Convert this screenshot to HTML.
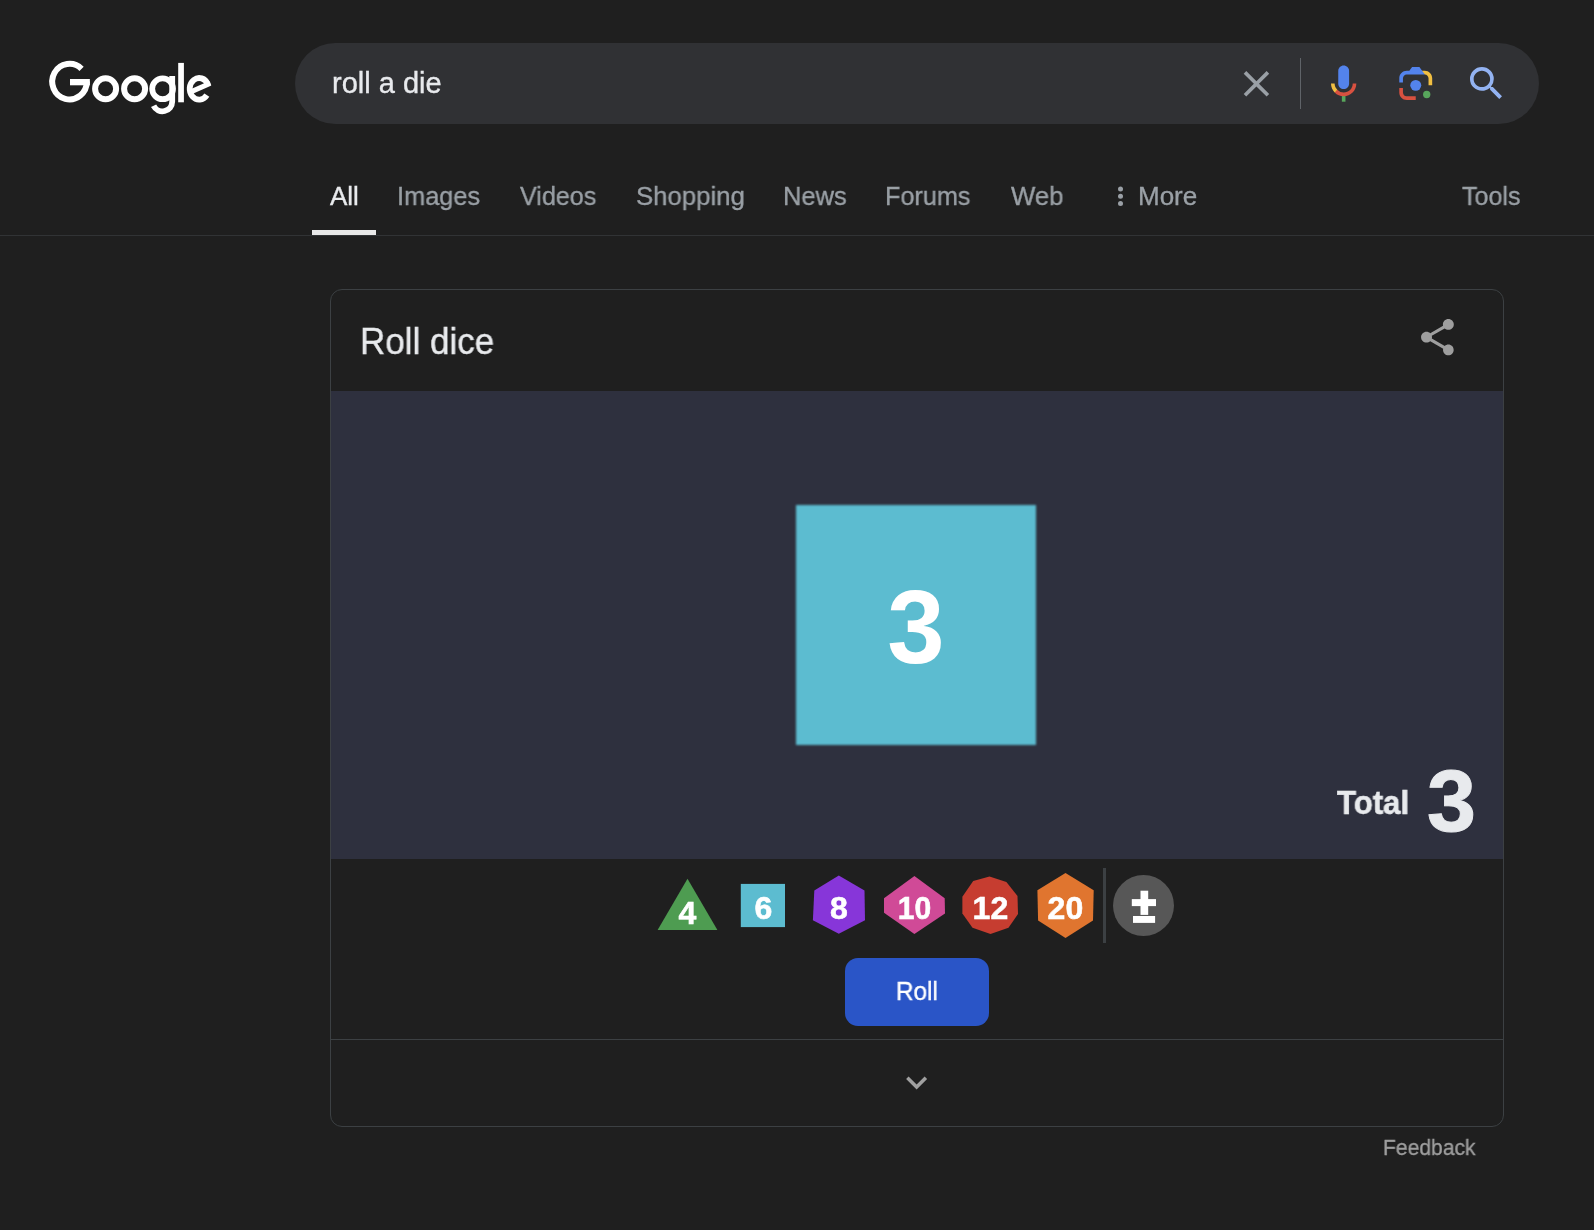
<!DOCTYPE html>
<html><head><meta charset="utf-8">
<style>
html,body{margin:0;padding:0;}
body{width:1594px;height:1230px;background:#1f1f1f;position:relative;overflow:hidden;font-family:"Liberation Sans",sans-serif;}
.a{position:absolute;white-space:nowrap;will-change:transform;}
#search{left:295px;top:43px;width:1244px;height:81px;border-radius:40.5px;background:#303134;}
#q{left:332px;top:69.2px;font-size:29px;line-height:29px;color:#e8eaed;-webkit-text-stroke:0.35px #e8eaed;}
#vdiv{left:1300px;top:58px;width:1px;height:51px;background:#5f6368;}
.tab{top:183.4px;transform-origin:0 0;font-size:26px;line-height:26px;color:#9aa0a6;-webkit-text-stroke:0.35px currentColor;}
#uline{left:312px;top:230px;width:64px;height:5px;background:#e8e8e8;}
#hline{left:0;top:235px;width:1594px;height:1px;background:#313335;}
#card{left:330px;top:289px;width:1172px;height:836px;border:1px solid #3c4043;border-radius:12px;}
#title{left:360px;top:322.5px;font-size:37px;line-height:37px;color:#e8eaed;-webkit-text-stroke:0.4px #e8eaed;transform:scaleX(0.946);transform-origin:0 0;}
#dice{left:331px;top:391px;width:1172px;height:468px;background:#2e303e;}
#die{left:795.6px;top:505.1px;width:240px;height:240px;background:#5cbcd0;filter:blur(1px);}
#die3{left:796px;top:508px;width:240px;height:240px;text-align:center;line-height:240px;font-size:103px;font-weight:bold;color:#fff;}
#total{left:1337px;top:786.1px;font-size:33.5px;line-height:33.5px;font-weight:bold;color:#e8eaed;-webkit-text-stroke:0.6px #e8eaed;transform:scaleX(0.93);transform-origin:0 0;}
#total3{left:1427px;top:757.3px;font-size:88px;line-height:88px;font-weight:bold;color:#e8eaed;-webkit-text-stroke:1px #e8eaed;}
#sdiv{left:1103px;top:868px;width:3px;height:75px;background:#3c4043;}
#pm{left:1113px;top:875px;width:61px;height:61px;border-radius:50%;background:#575757;}
#roll{left:845px;top:958px;width:144px;height:68px;border-radius:13px;background:#2a55c7;}
#rolltxt{left:845px;top:977.6px;width:144px;text-align:center;font-size:26px;line-height:26px;color:#fff;-webkit-text-stroke:0.4px #fff;transform:scaleX(0.935);}
#bline{left:331px;top:1039px;width:1172px;height:1px;background:#3c4043;}
#feedback{left:1382.6px;top:1137px;font-size:22.2px;line-height:22px;color:#9e9e9e;-webkit-text-stroke:0.35px #9e9e9e;transform:scaleX(0.95);transform-origin:0 0;}
svg.ov{position:absolute;left:0;top:0;}
</style></head>
<body>
<div class="a" id="search"></div>
<div class="a" id="q">roll a die</div>
<div class="a" id="vdiv"></div>

<div class="a tab" style="left:330px;color:#e8eaed">All</div>
<div class="a tab" style="left:396.5px;transform:scaleX(0.975)">Images</div>
<div class="a tab" style="left:520px;transform:scaleX(0.966)">Videos</div>
<div class="a tab" style="left:636px;transform:scaleX(0.99)">Shopping</div>
<div class="a tab" style="left:783px;transform:scaleX(0.98)">News</div>
<div class="a tab" style="left:885px;transform:scaleX(0.97)">Forums</div>
<div class="a tab" style="left:1011px;transform:scaleX(0.99)">Web</div>
<div class="a tab" style="left:1138.2px">More</div>
<div class="a tab" style="left:1462px;transform:scaleX(0.963)">Tools</div>
<div class="a" id="uline"></div>
<div class="a" id="hline"></div>

<div class="a" id="card"></div>
<div class="a" id="title">Roll dice</div>
<div class="a" id="dice"></div>
<div class="a" id="die"></div>
<div class="a" id="die3">3</div>
<div class="a" id="total">Total</div>
<div class="a" id="total3">3</div>
<div class="a" id="sdiv"></div>
<div class="a" id="pm"></div>
<div class="a" id="roll"></div>
<div class="a" id="rolltxt">Roll</div>
<div class="a" id="bline"></div>
<div class="a" id="feedback">Feedback</div>

<svg class="ov" width="1594" height="1230" viewBox="0 0 1594 1230">
  <!-- Google logo -->
  <defs><clipPath id="eclip"><ellipse cx="199.2" cy="88.8" rx="12.4" ry="13.6"/></clipPath></defs>
  <g fill="none" stroke="#ffffff">
    <path d="M86.85 81.60 A17.30 17.80 0 1 1 81.57 68.80" stroke-width="6"/>
    <circle cx="105.6" cy="88.75" r="10.5" stroke-width="6"/>
    <circle cx="134.6" cy="88.75" r="10.5" stroke-width="6"/>
    <circle cx="162.6" cy="88.8" r="10.4" stroke-width="5.8"/>
    <path d="M172.2 76.1 V101.5 A9.8 9.8 0 0 1 153.6 105.8" stroke-width="5.8"/>
    <path d="M207.81 84.24 A9.5 10.8 0 1 0 206.89 95.15" stroke-width="5.8"/>
  </g>
  <g fill="#ffffff">
    <rect x="70" y="79" width="19.85" height="6.3"/>
    <rect x="178.2" y="62.9" width="5.7" height="39.4"/>
    <polygon clip-path="url(#eclip)" points="190,89.44 214,78.88 214,84.36 190,94.92"/>
  </g>
  <!-- clear X -->
  <g transform="translate(1234.6,62) scale(1.82)"><path fill="#9aa0a6" d="M19 6.41L17.59 5 12 10.59 6.41 5 5 6.41 10.59 12 5 17.59 6.41 19 12 13.41 17.59 19 19 17.59 13.41 12z"/></g>
  <!-- mic -->
  <g transform="translate(1321.95,61.9) scale(1.81)">
    <path fill="#5383ec" d="m12 15c1.66 0 3-1.31 3-2.97v-7.02c0-1.66-1.34-3.01-3-3.01s-3 1.34-3 3.01v7.02c0 1.66 1.34 2.970 3 2.97z"/>
    <path fill="#58a65c" d="m11 18.08h2v3.92h-2z"/>
    <path fill="#f1bf42" d="m7.05 16.87c-1.270-1.330-2.050-2.830-2.050-4.870h2c0 1.450 0.560 2.420 1.470 3.380v0.32l-1.150 1.180z"/>
    <path fill="#d85140" d="m12 16.93a4.97 5.25 0 0 1 -3.54 -1.550l-1.410 1.490c1.260 1.340 3.020 2.130 4.950 2.130 3.870 0 6.990-2.920 6.990-7h-1.990c0 2.920-2.240 4.930-5 4.930z"/>
  </g>
  <!-- lens -->
  <g transform="translate(1393.8,61.6) scale(0.2285)">
    <circle fill="#58a65c" cx="144.07" cy="144" r="16"/>
    <circle fill="#5383ec" cx="96.07" cy="104" r="24"/>
    <path fill="#d85140" d="M24,135.2c0,18.11,14.69,32.8,32.8,32.8H96v-16l-40.1-0.1c-8.8,0-15.9-8.19-15.9-17.9v-18H24V135.2z"/>
    <path fill="#f1bf42" d="M168,72.8c0-18.11-14.69-32.8-32.8-32.8H116l20,16c8.8,0,16,8.29,16,18v30h16V72.8z"/>
    <path fill="#5383ec" d="M112,24l-32,0L68,40H56.8C38.69,40,24,54.69,24,72.8V92h16V74c0-9.710,7.2-18,16-18h80L112,24z"/>
  </g>
  <!-- search -->
  <g transform="translate(1464.5,61.5) scale(1.83)"><path fill="#93b3f2" d="M15.5 14h-.79l-.28-.27A6.471 6.471 0 0 0 16 9.5 6.5 6.5 0 1 0 9.5 16c1.61 0 3.09-.59 4.23-1.570l.27.28v.79l5 4.990L20.490 19l-4.990-5zm-6 0C7.01 14 5 11.990 5 9.5S7.01 5 9.5 5 14 7.01 14 9.5 11.990 14 9.5 14z"/></g>
  <!-- more dots -->
  <g fill="#9aa0a6">
    <circle cx="1120.5" cy="189.1" r="2.5"/>
    <circle cx="1120.5" cy="196.3" r="2.5"/>
    <circle cx="1120.5" cy="203.5" r="2.5"/>
  </g>
  <!-- share -->
  <g transform="translate(1415.6,315.3) scale(1.82)"><path fill="#9e9e9e" d="M18 16.08c-.76 0-1.44.3-1.96.77L8.91 12.7c.05-.23.09-.46.09-.7s-.04-.47-.09-.7l7.05-4.11c.54.5 1.25.81 2.040.81 1.660 0 3-1.340 3-3s-1.340-3-3-3-3 1.340-3 3c0 .24.04.47.09.7L8.04 9.81C7.5 9.31 6.79 9 6 9c-1.66 0-3 1.34-3 3s1.34 3 3 3c.79 0 1.5-.31 2.04-.81l7.12 4.16c-.05.21-.08.43-.08.65 0 1.61 1.31 2.92 2.92 2.92 1.61 0 2.92-1.31 2.92-2.92s-1.31-2.92-2.92-2.92z"/></g>
  <!-- dice selector -->
  <polygon fill="#4e9c51" points="687.5,878.8 717.4,929.9 657.6,929.9"/>
  <rect fill="#5cbcd0" x="740.8" y="883.9" width="44.2" height="43.2"/>
  <polygon fill="#8736d9" points="838.8,875.4 864.5,890.5 865,920.2 838.8,933.7 812.9,920.2 814.3,890.5"/>
  <polygon fill="#d04a97" points="914.4,875.9 944.7,898.2 945,913.4 914.4,933.9 884,912.7 884,898.2"/>
  <polygon fill="#c63d30" points="989.5,876.6 1006.4,881.9 1017.5,896 1018,914 1008.5,927.8 990.5,933.9 972.5,927.8 962.4,913.4 962.4,896.8 973.2,880.9"/>
  <polygon fill="#e0752f" points="1065.5,873 1093.7,890.3 1093,920.6 1065.5,937.9 1038.1,920.6 1037.4,890.3"/>
  <g fill="#ffffff" font-family="Liberation Sans" font-weight="bold" font-size="32" text-anchor="middle" stroke="#ffffff" stroke-width="0.6">
    <text x="687.4" y="924.4">4</text>
    <text x="763.3" y="918.5">6</text>
    <text x="838.8" y="918.5">8</text>
    <text transform="translate(914.4,919.2) scale(0.94,1)">10</text>
    <text x="990.4" y="919.2">12</text>
    <text x="1065.4" y="919.2">20</text>
  </g>
  <!-- plus minus -->
  <g fill="#ffffff">
    <rect x="1140.5" y="890.7" width="7.7" height="24.2"/>
    <rect x="1131.8" y="899.1" width="24.2" height="7"/>
    <rect x="1133" y="916" width="22.1" height="6.9"/>
  </g>
  <!-- chevron -->
  <g transform="translate(895.6,1061.4) scale(1.75)"><path fill="#a0a0a0" d="M16.59 8.59L12 13.17 7.41 8.59 6 10l6 6 6-6z"/></g>
</svg>
</body></html>
